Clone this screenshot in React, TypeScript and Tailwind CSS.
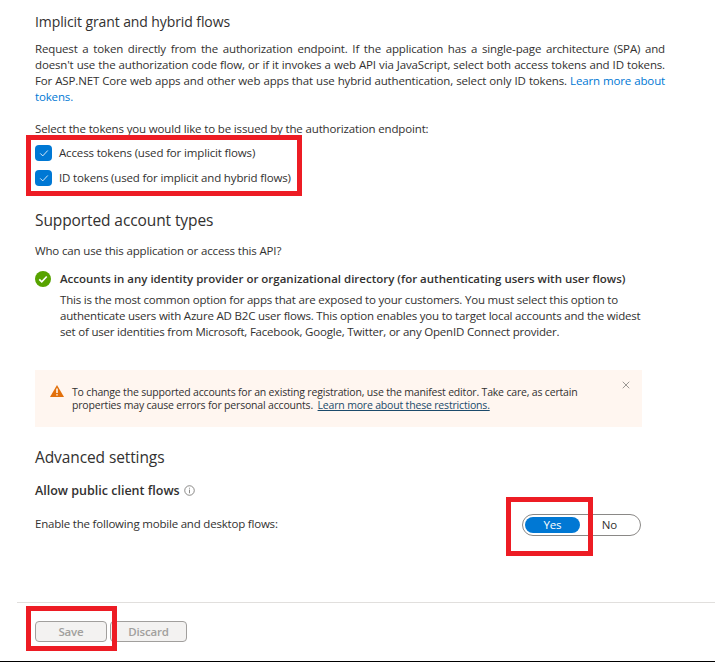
import { X } from "lucide-react";

const font = "font-['Open_Sans',sans-serif]";

function Check() {
  return (
    <div className="flex h-4 w-[17px] items-center justify-center rounded-sm bg-[#0078d4]">
      <svg viewBox="0 0 12 12" className="h-[10px] w-[10px]" fill="none" stroke="#fff" strokeWidth="1">
        <path d="M1.5 6.5 4.5 9.5 10.5 3" />
      </svg>
    </div>
  );
}

function RedBox({ className }: { className: string }) {
  return <div className={`pointer-events-none absolute border-[5px] border-[#ed1c24] ${className}`} />;
}

export default function App() {
  return (
    <div className={`${font} relative h-[662px] w-[715px] overflow-hidden border-b border-black bg-white text-[11.5px] leading-4 tracking-[-0.15px] text-[#323130]`}>
      <div className="px-[35px] pt-[13px]">
        <h2 className="text-[14px] leading-[18px] tracking-[-0.1px]">Implicit grant and hybrid flows</h2>
        <div className="mt-[10px] w-[630px]">
          <p className="[text-align-last:justify]">Request a token directly from the authorization endpoint. If the application has a single-page architecture (SPA) and</p>
          <p className="[text-align-last:justify]">doesn't use the authorization code flow, or if it invokes a web API via JavaScript, select both access tokens and ID tokens.</p>
          <p className="[text-align-last:justify]">
            For ASP.NET Core web apps and other web apps that use hybrid authentication, select only ID tokens. <span className="text-[#0078d4]">Learn more about</span>
          </p>
          <p className="text-[#0078d4]">tokens.</p>
        </div>
        <p className="mt-4">Select the tokens you would like to be issued by the authorization endpoint:</p>
        <div className="mt-2 flex flex-col gap-[9px]">
          <div className="flex items-center gap-[7px]">
            <Check />
            <span>Access tokens (used for implicit flows)</span>
          </div>
          <div className="flex items-center gap-[7px]">
            <Check />
            <span>ID tokens (used for implicit and hybrid flows)</span>
          </div>
        </div>

        <h2 className="mt-[25px] text-[15.5px] leading-[18px] tracking-[-0.1px]">Supported account types</h2>
        <p className="mt-[14px]">Who can use this application or access this API?</p>
        <div className="mt-3 flex gap-[9px]">
          <div className="flex h-4 w-4 shrink-0 items-center justify-center rounded-full bg-[#57a300]">
            <svg viewBox="0 0 12 12" className="h-[10px] w-[10px]" fill="none" stroke="#fff" strokeWidth="2">
              <path d="M1.5 6.5 4.5 9.5 10.5 3" />
            </svg>
          </div>
          <div>
            <p className="font-semibold tracking-normal">Accounts in any identity provider or organizational directory (for authenticating users with user flows)</p>
            <p className="mt-[5px] w-[590px] tracking-[-0.2px]">
              This is the most common option for apps that are exposed to your customers. You must select this option to authenticate users with Azure AD B2C user flows. This option enables you to target local accounts and the widest set of user identities from Microsoft, Facebook, Google, Twitter, or any OpenID Connect provider.
            </p>
          </div>
        </div>

        <div className="relative mt-[30px] flex h-[57px] w-[607px] gap-2 bg-[#fff6f0] pl-[15px] pt-[16px] text-[10.5px] leading-[13px] tracking-[-0.18px]">
          <svg viewBox="0 0 14 12" className="-mt-px h-3 w-[14px] shrink-0">
            <path d="M7 0 14 12H0Z" fill="#e2700c" />
            <path d="M7 3.5V8M7 9.2v1.3" stroke="#fff" strokeWidth="1.5" />
          </svg>
          <div>
            <p>To change the supported accounts for an existing registration, use the manifest editor. Take care, as certain</p>
            <p>
              properties may cause errors for personal accounts. <span className="ml-[2px] text-[#1b4a6b] underline">Learn more about these restrictions.</span>
            </p>
          </div>
          <X className="absolute right-[10px] top-[9px] h-3 w-3 text-[#605e5c]" strokeWidth={1.25} />
        </div>

        <h2 className="mt-[21px] text-[15.5px] leading-[18px] tracking-[-0.1px]">Advanced settings</h2>
        <div className="mt-4 flex items-center gap-1 pt-px">
          <span className="text-[12.5px] font-semibold tracking-normal">Allow public client flows</span>
          <svg viewBox="0 0 12 12" className="mb-[2px] h-[11px] w-[11px]" fill="none" stroke="#605e5c" strokeWidth="0.8">
            <circle cx="6" cy="6" r="5.2" />
            <path d="M6 5v4M6 3v1" />
          </svg>
        </div>
        <div className="mt-[15px] flex w-[606px] items-center justify-between">
          <span className="mb-0.5 tracking-[-0.2px]">Enable the following mobile and desktop flows:</span>
          <div className="flex h-[22px] w-[119px] items-center rounded-full border border-[#8a8886] px-[2px]">
            <span className="flex h-4 w-[55px] items-center justify-center rounded-full bg-[#0078d4] text-white">Yes</span>
            <span className="flex-1 pl-px text-center">No</span>
          </div>
        </div>
      </div>

      <div className="absolute bottom-0 left-0 right-0 ml-[17px] h-[59px] border-t border-[#e1dfdd]">
        <div className="ml-[18px] mt-[18px] flex gap-[3px] font-semibold text-[#a19f9d]">
          <div className="flex h-[21px] w-[72px] items-center justify-center rounded-sm border border-[#a19f9d] bg-[#f3f2f1]">Save</div>
          <div className="flex h-[21px] w-[77px] items-center justify-center rounded-sm border border-[#a19f9d] bg-[#f3f2f1]">Discard</div>
        </div>
      </div>

      <RedBox className="left-[26px] top-[135px] h-[61px] w-[276px]" />
      <RedBox className="left-[506px] top-[497px] h-[59px] w-[87px]" />
      <RedBox className="left-[26px] top-[606px] h-[45px] w-[91px]" />
    </div>
  );
}
